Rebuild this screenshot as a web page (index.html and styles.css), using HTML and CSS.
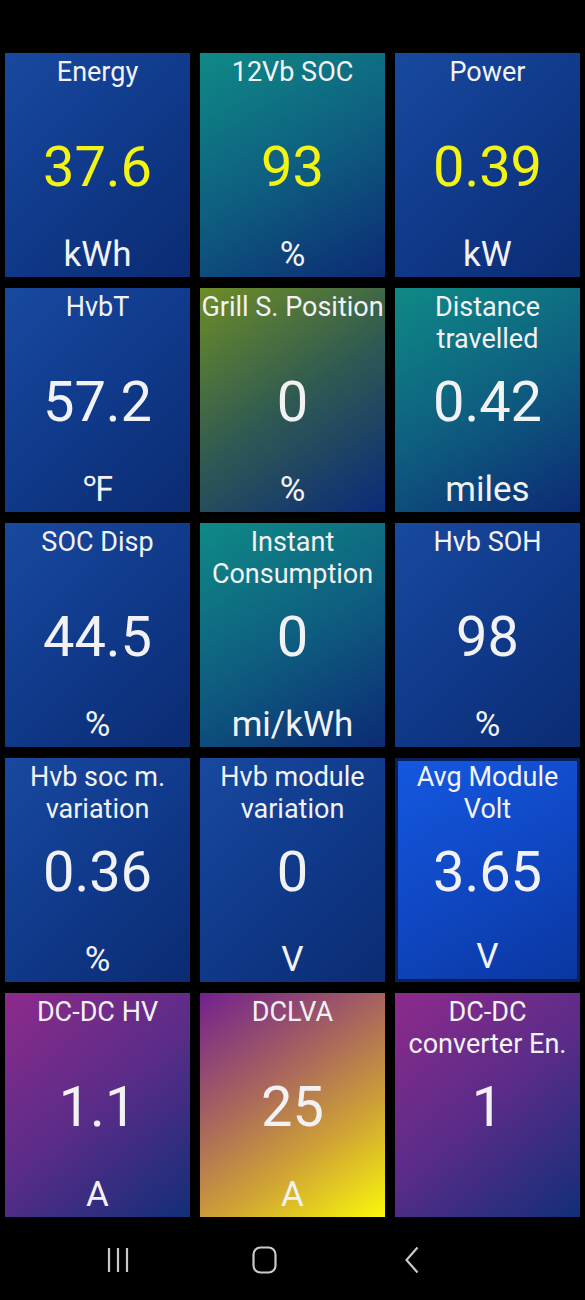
FILE: index.html
```html
<!DOCTYPE html>
<html>
<head>
    <meta charset="UTF-8">
    <title>Dashboard</title>
    <link rel="stylesheet" href="styles.css">
</head>
<body>
<div class="grid">
    <div class="tile blue">
        <div class="title">Energy</div>
        <div class="value yellow">37.6</div>
        <div class="unit">kWh</div>
    </div>
    <div class="tile teal">
        <div class="title">12Vb SOC</div>
        <div class="value yellow">93</div>
        <div class="unit">%</div>
    </div>
    <div class="tile blue">
        <div class="title">Power</div>
        <div class="value yellow">0.39</div>
        <div class="unit">kW</div>
    </div>

    <div class="tile blue">
        <div class="title">HvbT</div>
        <div class="value">57.2</div>
        <div class="unit">&#8457;</div>
    </div>
    <div class="tile olive">
        <div class="title">Grill S. Position</div>
        <div class="value">0</div>
        <div class="unit">%</div>
    </div>
    <div class="tile teal">
        <div class="title">Distance<br>travelled</div>
        <div class="value">0.42</div>
        <div class="unit">miles</div>
    </div>

    <div class="tile blue">
        <div class="title">SOC Disp</div>
        <div class="value">44.5</div>
        <div class="unit">%</div>
    </div>
    <div class="tile teal">
        <div class="title">Instant<br>Consumption</div>
        <div class="value">0</div>
        <div class="unit">mi/kWh</div>
    </div>
    <div class="tile blue">
        <div class="title">Hvb SOH</div>
        <div class="value">98</div>
        <div class="unit">%</div>
    </div>

    <div class="tile blue">
        <div class="title">Hvb soc m.<br>variation</div>
        <div class="value">0.36</div>
        <div class="unit">%</div>
    </div>
    <div class="tile blue">
        <div class="title">Hvb module<br>variation</div>
        <div class="value">0</div>
        <div class="unit">V</div>
    </div>
    <div class="tile bright">
        <div class="title">Avg Module<br>Volt</div>
        <div class="value">3.65</div>
        <div class="unit">V</div>
    </div>

    <div class="tile purple">
        <div class="title">DC-DC HV</div>
        <div class="value">1.1</div>
        <div class="unit">A</div>
    </div>
    <div class="tile sunset">
        <div class="title">DCLVA</div>
        <div class="value">25</div>
        <div class="unit">A</div>
    </div>
    <div class="tile purple">
        <div class="title">DC-DC<br>converter En.</div>
        <div class="value">1</div>
        <div class="unit"></div>
    </div>
</div>

<div class="navbar">
    <div class="navbtn">
        <svg width="24" height="26" viewBox="0 0 24 26">
            <path d="M3 1V25M12 1V25M21 1V25" stroke="#c9c9c9" stroke-width="2.2" fill="none"/>
        </svg>
    </div>
    <div class="navbtn">
        <svg width="25" height="28" viewBox="0 0 25 28">
            <rect x="1.5" y="1.5" width="22" height="25" rx="7" stroke="#c9c9c9" stroke-width="2.2" fill="none"/>
        </svg>
    </div>
    <div class="navbtn">
        <svg width="14" height="28" viewBox="0 0 14 28">
            <path d="M12.5 1.5L1.5 14L12.5 26.5" stroke="#c9c9c9" stroke-width="2.2" fill="none" stroke-linejoin="miter"/>
        </svg>
    </div>
</div>
</body>
</html>
```

FILE: styles.css
```css
*{
    box-sizing:border-box;
}

body{
    margin:0;
    background:#000;
    font-family:Roboto,"Noto Sans","DejaVu Sans",sans-serif;
    color:#f2f2f4;
}

.grid{
    display:grid;
    grid-template-columns:repeat(3,185px);
    grid-auto-rows:224px;
    column-gap:10px;
    row-gap:11px;
    padding:53px 5px 0;
}

.tile{
    display:flex;
    flex-direction:column;
    align-items:center;
    padding-top:3px;
    text-align:center;
    overflow:hidden;
}

.title{
    height:64px;
    font-size:27px;
    line-height:32px;
    white-space:nowrap;
}

.value{
    height:94px;
    font-size:56px;
    line-height:94px;
}

.yellow{
    color:#f3f314;
}

.unit{
    margin-top:auto;
    padding-bottom:2px;
    font-size:35px;
    line-height:40px;
    height:42px;
}

/* colour themes of the tiles */
.blue{
    background:linear-gradient(135deg,#1849a0 0%,#0f3888 55%,#0b2b72 100%);
}

.teal{
    background:linear-gradient(150deg,#0f8a86 0%,#0e5f80 50%,#0c2a74 100%);
}

.olive{
    background:linear-gradient(145deg,#6e8d26 0%,#2f5a52 50%,#0b2a7a 100%);
}

.purple{
    background:linear-gradient(140deg,#8e2a8c 0%,#5a2c88 50%,#122e78 100%);
}

.sunset{
    background:linear-gradient(145deg,#72208f 0%,#a8645e 38%,#d0a434 68%,#faf80a 100%);
}

.bright{
    border:3px solid #0a1f5c;
    padding-top:0;
    background:linear-gradient(150deg,#1458e0 0%,#0f46c0 55%,#0a36a0 100%);
}

.navbar{
    display:flex;
    height:83px;
    padding:3px 0 0 44px;
}

.navbtn{
    width:147px;
    display:flex;
    align-items:center;
    justify-content:center;
}

.navbtn svg{
    display:block;
}
```
